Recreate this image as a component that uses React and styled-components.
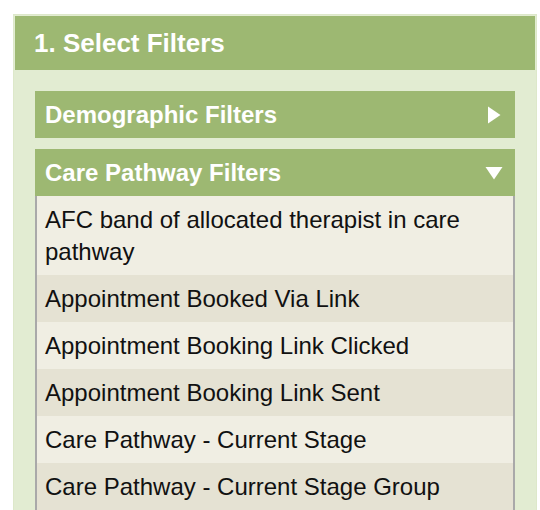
import React, { useState } from "react";
import styled, { createGlobalStyle } from "styled-components";

const Global = createGlobalStyle`
  html, body {
    margin: 0;
    background: #fff;
    font-family: "Liberation Sans", Arial, sans-serif;
    overflow: hidden;
  }
`;

const Panel = styled.div`
  margin: 14px 0 0 13px;
  width: 524px;
  box-sizing: border-box;
  padding: 1px;
  border: 1px solid #dde8ca;
  background: #e2ecd2;
`;

const PanelTitle = styled.h2`
  margin: 0;
  height: 54px;
  display: flex;
  align-items: center;
  padding: 0 0 0 19px;
  background: #9db872;
  color: #fff;
  font-size: 26px;
  font-weight: bold;
`;

const PanelBody = styled.div`
  padding: 21px 20px 0;
  display: flex;
  flex-direction: column;
  gap: 11px;
`;

const Section = styled.div`
  display: flex;
  flex-direction: column;
`;

const SectionHeader = styled.button`
  all: unset;
  box-sizing: border-box;
  height: 47px;
  display: flex;
  align-items: center;
  justify-content: space-between;
  padding: 0 12px 0 10px;
  background: #9db872;
  color: #fff;
  font-family: "Liberation Sans", Arial, sans-serif;
  font-size: 24px;
  font-weight: bold;
  cursor: pointer;
`;

const Arrow = ({ open }) => (
  <svg width="18" height="18" viewBox="0 0 18 18">
    {open ? (
      <polygon points="0.5,3 17.5,3 9,15.5" fill="#fff" />
    ) : (
      <polygon points="3,0.5 3,17.5 15.5,9" fill="#fff" />
    )}
  </svg>
);

const List = styled.ul`
  list-style: none;
  margin: 0;
  padding: 0;
  border-left: 2px solid #a9a9a9;
  border-right: 2px solid #a9a9a9;
`;

const Item = styled.li`
  padding: 7.5px 10px 7.5px 8px;
  line-height: 32px;
  font-size: 24px;
  color: #111;
  background: ${(p) => (p.$alt ? "#e5e2d3" : "#f0eee3")};
  cursor: pointer;
`;

const carePathway = [
  "AFC band of allocated therapist in care pathway",
  "Appointment Booked Via Link",
  "Appointment Booking Link Clicked",
  "Appointment Booking Link Sent",
  "Care Pathway - Current Stage",
  "Care Pathway - Current Stage Group",
];

export default function App() {
  const [open, setOpen] = useState("care");
  const toggle = (k) => setOpen(open === k ? null : k);

  return (
    <>
      <Global />
      <Panel>
        <PanelTitle>1. Select Filters</PanelTitle>
        <PanelBody>
          <Section>
            <SectionHeader onClick={() => toggle("demo")}>
              Demographic Filters
              <Arrow open={open === "demo"} />
            </SectionHeader>
          </Section>
          <Section>
            <SectionHeader onClick={() => toggle("care")}>
              Care Pathway Filters
              <Arrow open={open === "care"} />
            </SectionHeader>
            {open === "care" && (
              <List>
                {carePathway.map((f, i) => (
                  <Item key={f} $alt={i % 2 === 1}>
                    {f}
                  </Item>
                ))}
              </List>
            )}
          </Section>
        </PanelBody>
      </Panel>
    </>
  );
}
